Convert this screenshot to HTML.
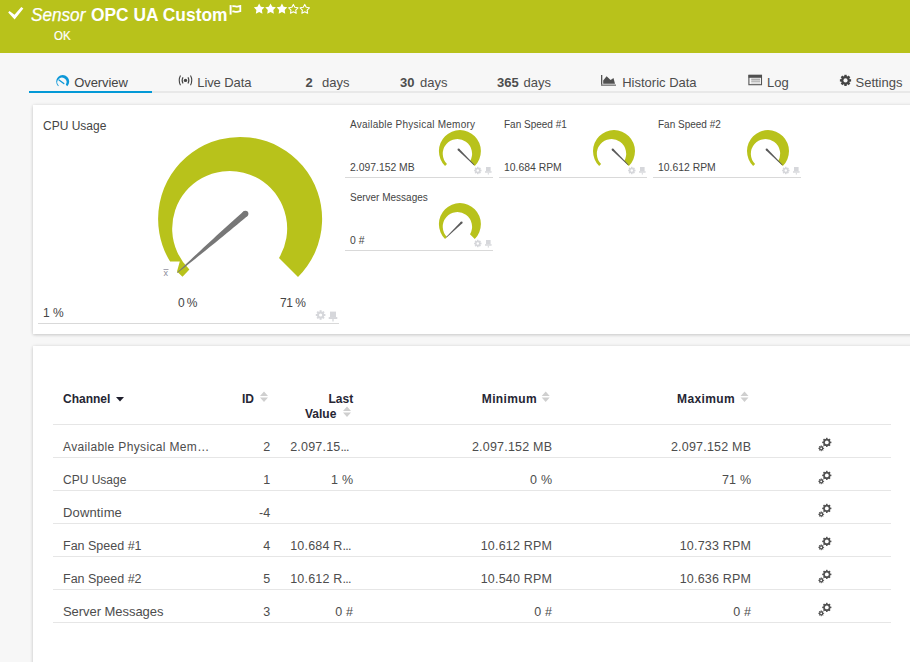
<!DOCTYPE html>
<html><head><meta charset="utf-8">
<style>
*{margin:0;padding:0;box-sizing:border-box}
html,body{width:910px;height:662px;overflow:hidden;background:#f7f7f7;font-family:"Liberation Sans",sans-serif;position:relative}
.a{position:absolute;white-space:nowrap;line-height:1}
#hdr{position:absolute;left:0;top:0;width:910px;height:53px;background:#b8c21b}
.w{color:#fff}
.tab{color:#4d4d4d;font-size:13px}
.panel{position:absolute;background:#fff;box-shadow:0 1px 3px rgba(0,0,0,.16),0 0 4px rgba(0,0,0,.07)}
.ct{color:#444;font-size:12px}
.st{color:#444;font-size:10px}
.th{color:#262634;font-size:12px;font-weight:bold}
.td{color:#4d4d4d;font-size:12px}
.tn{color:#4d4d4d;font-size:12.5px;letter-spacing:0.2px}
.hl{position:absolute;height:1px;background:#e6e6e6}
</style></head>
<body>
<div id="hdr"></div>
<svg class="a" style="left:0;top:0" width="320" height="25" viewBox="0 0 320 25"><path d="M9.5 11 L14.5 14.8 L21.3 7 L23.4 8.5 L14.6 19.6 L8.2 12.6 Z" fill="#fff"/><rect x="229.6" y="5.1" width="2" height="9.5" fill="#fff"/><path d="M232.3 6.4 C234.5 5.4 236.5 7.2 238.5 6.3 C239.5 6 240.3 5.9 240.3 5.9 V11.2 C238.5 11.2 236.5 12.5 234.5 11.6 C233.5 11.2 232.3 11.6 232.3 11.6" fill="none" stroke="#fff" stroke-width="1.8"/><path d="M259.15 3.50 L260.85 6.75 L264.48 7.37 L261.91 10.00 L262.44 13.63 L259.15 12.00 L255.86 13.63 L256.39 10.00 L253.82 7.37 L257.45 6.75Z" fill="#fff"/><path d="M270.55 3.50 L272.25 6.75 L275.88 7.37 L273.31 10.00 L273.84 13.63 L270.55 12.00 L267.26 13.63 L267.79 10.00 L265.22 7.37 L268.85 6.75Z" fill="#fff"/><path d="M281.95 3.50 L283.65 6.75 L287.28 7.37 L284.71 10.00 L285.24 13.63 L281.95 12.00 L278.66 13.63 L279.19 10.00 L276.62 7.37 L280.25 6.75Z" fill="#fff"/><path d="M293.35 4.40 L294.82 7.28 L298.01 7.79 L295.73 10.07 L296.23 13.26 L293.35 11.80 L290.47 13.26 L290.97 10.07 L288.69 7.79 L291.88 7.28Z" fill="none" stroke="#fff" stroke-width="1.1" stroke-linejoin="round"/><path d="M304.75 4.40 L306.22 7.28 L309.41 7.79 L307.13 10.07 L307.63 13.26 L304.75 11.80 L301.87 13.26 L302.37 10.07 L300.09 7.79 L303.28 7.28Z" fill="none" stroke="#fff" stroke-width="1.1" stroke-linejoin="round"/></svg>
<div class="a w" style="left:31.2px;top:5.6px;font-size:18.2px;font-style:italic;transform:scaleX(0.943);transform-origin:0 0;-webkit-text-stroke:0.25px #fff">Sensor</div>
<div class="a w" style="left:91px;top:5.0px;font-size:19px;font-weight:bold;transform:scaleX(0.915);transform-origin:0 0">OPC UA Custom</div>
<div class="a w" style="left:54.2px;top:29.9px;font-size:12.8px;transform:scaleX(0.9);transform-origin:0 0;-webkit-text-stroke:0.2px #fff">OK</div>
<div class="hl" style="left:29px;top:91px;width:881px;height:2px;background:#e8e8e8"></div>
<div class="hl" style="left:29px;top:91px;width:123px;height:2px;background:#0399d6"></div>
<svg class="a" style="left:0;top:60px" width="100" height="40" viewBox="0 60 100 40"><path transform="translate(62.7 81.6) scale(0.0793)" d="M58 58 A82 82 0 1 0 -58 58 L-50 50 A57.5 57.5 0 1 1 39 39 Z" fill="#0d98d8"/><path d="M59 80 L63.8 83.6" stroke="#0d98d8" stroke-width="1.3" stroke-linecap="round"/></svg>
<div class="a tab" style="left:74.3px;top:75.6px;color:#444;letter-spacing:-0.1px">Overview</div>
<svg class="a" style="left:0;top:60px" width="200" height="40" viewBox="0 60 200 40"><circle cx="185.5" cy="80.4" r="1.7" fill="#444"/><path d="M183 77.3 Q181.2 80.4 183 83.5 M188 77.3 Q189.8 80.4 188 83.5 M180.5 75.6 Q177.9 80.4 180.5 85.2 M190.5 75.6 Q193.1 80.4 190.5 85.2" fill="none" stroke="#444" stroke-width="1.1"/></svg>
<div class="a tab" style="left:197.3px;top:75.6px;letter-spacing:-0.1px">Live Data</div>
<div class="a tab" style="left:305.5px;top:75.6px;font-weight:bold">2</div>
<div class="a tab" style="left:322px;top:75.6px;">days</div>
<div class="a tab" style="left:400px;top:75.6px;font-weight:bold">30</div>
<div class="a tab" style="left:420px;top:75.6px;">days</div>
<div class="a tab" style="left:497px;top:75.6px;font-weight:bold">365</div>
<div class="a tab" style="left:523.5px;top:75.6px;">days</div>
<svg class="a" style="left:600px;top:73px" width="17" height="14" viewBox="0 0 17 14"><rect x="1" y="2" width="1.3" height="11" fill="#555"/><rect x="1" y="11.4" width="15" height="1.6" fill="#8a8a8a"/><path d="M3.2 10.8 V7.5 L6.6 3.2 L10.6 7.1 L13.5 5.1 L15 10.8 Z" fill="#505050"/></svg>
<div class="a tab" style="left:622.2px;top:75.6px">Historic Data</div>
<svg class="a" style="left:748px;top:74px" width="15" height="12" viewBox="0 0 15 12"><rect x="0.9" y="1.3" width="12.6" height="9.4" fill="none" stroke="#555" stroke-width="1.1"/><rect x="0.5" y="0.9" width="13.4" height="2.9" fill="#505050"/><path d="M3.2 5.2 H12 M3.2 7.1 H12" stroke="#777" stroke-width="0.8"/><path d="M3.2 9 H12" stroke="#bbb" stroke-width="0.8"/></svg>
<div class="a tab" style="left:767px;top:75.6px">Log</div>
<svg class="a" style="left:0;top:60px" width="910" height="30" viewBox="0 60 910 30"><g transform="translate(845.5 80.4)" fill="#444"><circle r="4.4"/><rect x="-1.2" y="-5.6" width="2.4" height="11.2" transform="rotate(0.0)"/><rect x="-1.2" y="-5.6" width="2.4" height="11.2" transform="rotate(45.0)"/><rect x="-1.2" y="-5.6" width="2.4" height="11.2" transform="rotate(90.0)"/><rect x="-1.2" y="-5.6" width="2.4" height="11.2" transform="rotate(135.0)"/><circle r="2.1" fill="#f7f7f7"/></g></svg>
<div class="a tab" style="left:855.5px;top:75.6px">Settings</div>
<div class="panel" style="left:33px;top:105px;width:890px;height:229px"></div>
<div class="a ct" style="left:43px;top:119.5px">CPU Usage</div>
<svg class="a" style="left:0;top:0" width="910" height="340" viewBox="0 0 910 340"><path d="M298 277 A82 82 0 1 0 170.1 261.6 L179.8 261.6 L177 271.6 L182.5 276.7 L189.4 269.5 A57.5 57.5 0 1 1 279 258 Z" fill="#b8c21b"/><path d="M243.44 211.43 L240.05 214.41 L236.67 217.41 L233.31 220.42 L229.96 223.45 L226.62 226.48 L223.28 229.52 L219.95 232.56 L216.62 235.61 L213.30 238.67 L209.98 241.73 L206.67 244.79 L203.36 247.87 L200.05 250.94 L196.75 254.02 L193.45 257.10 L190.16 260.19 L186.86 263.28 L183.57 266.38 L180.29 269.47 L177.00 272.57 L177.40 273.03 L180.93 270.22 L184.47 267.40 L188.00 264.59 L191.52 261.77 L195.05 258.95 L198.57 256.12 L202.09 253.29 L205.60 250.45 L209.11 247.62 L212.62 244.77 L216.12 241.92 L219.62 239.07 L223.11 236.21 L226.60 233.34 L230.08 230.47 L233.56 227.59 L237.03 224.71 L240.49 221.81 L243.93 218.90 L247.36 215.97Z" fill="#777"/><circle cx="245.4" cy="213.7" r="3.0" fill="#777"/><rect x="163.5" y="269" width="5" height="0.9" fill="#9a9aa8"/></svg>
<div class="a" style="left:163.5px;top:268.7px;font-size:9px;color:#8a8a9a">x</div>
<div class="a ct" style="left:178px;top:297px;letter-spacing:-0.6px">0 %</div>
<div class="a ct" style="left:280px;top:297px;letter-spacing:-0.5px">71 %</div>
<div class="a ct" style="left:43px;top:307px">1 %</div>
<div class="hl" style="left:38px;top:323px;width:301px;background:#d9d9d9"></div>
<div class="a st" style="left:350px;top:119.5px;letter-spacing:0.24px">Available Physical Memory</div>
<div class="a st" style="left:350px;top:162.5px;font-size:10.4px">2.097.152 MB</div>
<div class="hl" style="left:345px;top:177px;width:148px;background:#d9d9d9"></div>
<div class="a st" style="left:504px;top:119.5px;letter-spacing:0px">Fan Speed #1</div>
<div class="a st" style="left:504px;top:162.5px;font-size:10.4px">10.684 RPM</div>
<div class="hl" style="left:499px;top:177px;width:148px;background:#d9d9d9"></div>
<div class="a st" style="left:658px;top:119.5px;letter-spacing:0px">Fan Speed #2</div>
<div class="a st" style="left:658px;top:162.5px;font-size:10.4px">10.612 RPM</div>
<div class="hl" style="left:653px;top:177px;width:148px;background:#d9d9d9"></div>
<div class="a st" style="left:350px;top:192.5px;letter-spacing:0px">Server Messages</div>
<div class="a st" style="left:350px;top:235.5px;font-size:10.4px">0 #</div>
<div class="hl" style="left:345px;top:250px;width:148px;background:#d9d9d9"></div>
<svg class="a" style="left:0;top:0" width="910" height="340" viewBox="0 0 910 340"><path transform="translate(459.9 151.1)" d="M14.85 14.85 A21 21 0 1 0 -14.85 14.85 L-12.91 12.91 A14.65 14.65 0 1 1 10.09 10.09 Z" fill="#b8c21b"/><path d="M457.80 150.21 L473.95 165.15 L474.45 164.65 L459.20 148.79Z" fill="#5a5a5a"/><circle cx="458.50" cy="149.50" r="1.0" fill="#5a5a5a"/><path transform="translate(614 151.1)" d="M14.85 14.85 A21 21 0 1 0 -14.85 14.85 L-12.91 12.91 A14.65 14.65 0 1 1 10.09 10.09 Z" fill="#b8c21b"/><path d="M611.90 150.21 L628.05 165.15 L628.55 164.65 L613.30 148.79Z" fill="#5a5a5a"/><circle cx="612.60" cy="149.50" r="1.0" fill="#5a5a5a"/><path transform="translate(768 151.1)" d="M14.85 14.85 A21 21 0 1 0 -14.85 14.85 L-12.91 12.91 A14.65 14.65 0 1 1 10.09 10.09 Z" fill="#b8c21b"/><path d="M765.90 150.21 L782.05 165.15 L782.55 164.65 L767.30 148.79Z" fill="#5a5a5a"/><circle cx="766.60" cy="149.50" r="1.0" fill="#5a5a5a"/><path transform="translate(459.9 224.1)" d="M14.85 14.85 A21 21 0 1 0 -14.85 14.85 L-12.91 12.91 A14.65 14.65 0 1 1 10.09 10.09 Z" fill="#b8c21b"/><path d="M460.87 221.75 L446.19 237.09 L446.61 237.51 L462.33 223.25Z" fill="#5a5a5a"/><circle cx="461.60" cy="222.50" r="1.05" fill="#5a5a5a"/><g transform="translate(477.8 170.5)" fill="#d6d7db"><circle r="2.8"/><rect x="-0.8" y="-3.7" width="1.6" height="7.4" transform="rotate(0.0)"/><rect x="-0.8" y="-3.7" width="1.6" height="7.4" transform="rotate(45.0)"/><rect x="-0.8" y="-3.7" width="1.6" height="7.4" transform="rotate(90.0)"/><rect x="-0.8" y="-3.7" width="1.6" height="7.4" transform="rotate(135.0)"/><circle r="1.2" fill="#fff"/></g><g transform="translate(488.3 170)" fill="#d6d7db"><rect x="-2.3" y="-3" width="4.6" height="4.2"/><rect x="-3.3" y="1.2" width="6.6" height="1.5"/><rect x="-0.5" y="2.7" width="1" height="1.9"/></g><g transform="translate(631.8 170.5)" fill="#d6d7db"><circle r="2.8"/><rect x="-0.8" y="-3.7" width="1.6" height="7.4" transform="rotate(0.0)"/><rect x="-0.8" y="-3.7" width="1.6" height="7.4" transform="rotate(45.0)"/><rect x="-0.8" y="-3.7" width="1.6" height="7.4" transform="rotate(90.0)"/><rect x="-0.8" y="-3.7" width="1.6" height="7.4" transform="rotate(135.0)"/><circle r="1.2" fill="#fff"/></g><g transform="translate(642.3 170)" fill="#d6d7db"><rect x="-2.3" y="-3" width="4.6" height="4.2"/><rect x="-3.3" y="1.2" width="6.6" height="1.5"/><rect x="-0.5" y="2.7" width="1" height="1.9"/></g><g transform="translate(785.8 170.5)" fill="#d6d7db"><circle r="2.8"/><rect x="-0.8" y="-3.7" width="1.6" height="7.4" transform="rotate(0.0)"/><rect x="-0.8" y="-3.7" width="1.6" height="7.4" transform="rotate(45.0)"/><rect x="-0.8" y="-3.7" width="1.6" height="7.4" transform="rotate(90.0)"/><rect x="-0.8" y="-3.7" width="1.6" height="7.4" transform="rotate(135.0)"/><circle r="1.2" fill="#fff"/></g><g transform="translate(796.3 170)" fill="#d6d7db"><rect x="-2.3" y="-3" width="4.6" height="4.2"/><rect x="-3.3" y="1.2" width="6.6" height="1.5"/><rect x="-0.5" y="2.7" width="1" height="1.9"/></g><g transform="translate(477.8 243.5)" fill="#d6d7db"><circle r="2.8"/><rect x="-0.8" y="-3.7" width="1.6" height="7.4" transform="rotate(0.0)"/><rect x="-0.8" y="-3.7" width="1.6" height="7.4" transform="rotate(45.0)"/><rect x="-0.8" y="-3.7" width="1.6" height="7.4" transform="rotate(90.0)"/><rect x="-0.8" y="-3.7" width="1.6" height="7.4" transform="rotate(135.0)"/><circle r="1.2" fill="#fff"/></g><g transform="translate(488.3 243)" fill="#d6d7db"><rect x="-2.3" y="-3" width="4.6" height="4.2"/><rect x="-3.3" y="1.2" width="6.6" height="1.5"/><rect x="-0.5" y="2.7" width="1" height="1.9"/></g><g transform="translate(320.6 315)" fill="#d6d7db"><circle r="3.6"/><rect x="-1.0" y="-4.8" width="2.0" height="9.6" transform="rotate(0.0)"/><rect x="-1.0" y="-4.8" width="2.0" height="9.6" transform="rotate(45.0)"/><rect x="-1.0" y="-4.8" width="2.0" height="9.6" transform="rotate(90.0)"/><rect x="-1.0" y="-4.8" width="2.0" height="9.6" transform="rotate(135.0)"/><circle r="1.6" fill="#fff"/></g><g transform="translate(333 315.5) scale(1.3)" fill="#d6d7db"><rect x="-2.3" y="-3" width="4.6" height="4.2"/><rect x="-3.3" y="1.2" width="6.6" height="1.5"/><rect x="-0.5" y="2.7" width="1" height="1.9"/></g></svg>
<div class="panel" style="left:33px;top:346px;width:890px;height:400px"></div>
<div class="a th" style="left:63px;top:393px">Channel</div>
<svg class="a" style="left:116px;top:397px" width="8" height="5" viewBox="0 0 8 5"><path d="M0 0 H8 L4 4.5 Z" fill="#1e1e2c"/></svg>
<div class="a th" style="left:242px;top:393px">ID</div>
<div class="a th" style="left:328.5px;top:393px">Last</div>
<div class="a th" style="left:305px;top:407.5px">Value</div>
<div class="a th" style="left:481.8px;top:393px;letter-spacing:0.35px">Minimum</div>
<div class="a th" style="left:677px;top:393px;letter-spacing:0.4px">Maximum</div>
<svg class="a" style="left:0;top:0" width="910" height="662" viewBox="0 0 910 662"><path transform="translate(260 391.5)" d="M0 4.5 L4 0 L8 4.5 Z M0 6 L8 6 L4 10.5 Z" fill="#cfcfcf"/><path transform="translate(343 406.5)" d="M0 4.5 L4 0 L8 4.5 Z M0 6 L8 6 L4 10.5 Z" fill="#cfcfcf"/><path transform="translate(541.7 391.5)" d="M0 4.5 L4 0 L8 4.5 Z M0 6 L8 6 L4 10.5 Z" fill="#cfcfcf"/><path transform="translate(740.5 391.5)" d="M0 4.5 L4 0 L8 4.5 Z M0 6 L8 6 L4 10.5 Z" fill="#cfcfcf"/><g transform="translate(826.8 442.40000000000003)" fill="#505050"><circle r="3.6"/><rect x="-0.75" y="-4.6" width="1.5" height="9.2" transform="rotate(0.0)"/><rect x="-0.75" y="-4.6" width="1.5" height="9.2" transform="rotate(45.0)"/><rect x="-0.75" y="-4.6" width="1.5" height="9.2" transform="rotate(90.0)"/><rect x="-0.75" y="-4.6" width="1.5" height="9.2" transform="rotate(135.0)"/><circle r="1.9" fill="#fff"/></g><g transform="translate(821.2 448.3)" fill="#505050"><circle r="2.1"/><rect x="-0.5" y="-2.9" width="1.0" height="5.8" transform="rotate(0.0)"/><rect x="-0.5" y="-2.9" width="1.0" height="5.8" transform="rotate(45.0)"/><rect x="-0.5" y="-2.9" width="1.0" height="5.8" transform="rotate(90.0)"/><rect x="-0.5" y="-2.9" width="1.0" height="5.8" transform="rotate(135.0)"/><circle r="0.9" fill="#fff"/></g><g transform="translate(826.8 475.40000000000003)" fill="#505050"><circle r="3.6"/><rect x="-0.75" y="-4.6" width="1.5" height="9.2" transform="rotate(0.0)"/><rect x="-0.75" y="-4.6" width="1.5" height="9.2" transform="rotate(45.0)"/><rect x="-0.75" y="-4.6" width="1.5" height="9.2" transform="rotate(90.0)"/><rect x="-0.75" y="-4.6" width="1.5" height="9.2" transform="rotate(135.0)"/><circle r="1.9" fill="#fff"/></g><g transform="translate(821.2 481.3)" fill="#505050"><circle r="2.1"/><rect x="-0.5" y="-2.9" width="1.0" height="5.8" transform="rotate(0.0)"/><rect x="-0.5" y="-2.9" width="1.0" height="5.8" transform="rotate(45.0)"/><rect x="-0.5" y="-2.9" width="1.0" height="5.8" transform="rotate(90.0)"/><rect x="-0.5" y="-2.9" width="1.0" height="5.8" transform="rotate(135.0)"/><circle r="0.9" fill="#fff"/></g><g transform="translate(826.8 508.4)" fill="#505050"><circle r="3.6"/><rect x="-0.75" y="-4.6" width="1.5" height="9.2" transform="rotate(0.0)"/><rect x="-0.75" y="-4.6" width="1.5" height="9.2" transform="rotate(45.0)"/><rect x="-0.75" y="-4.6" width="1.5" height="9.2" transform="rotate(90.0)"/><rect x="-0.75" y="-4.6" width="1.5" height="9.2" transform="rotate(135.0)"/><circle r="1.9" fill="#fff"/></g><g transform="translate(821.2 514.3)" fill="#505050"><circle r="2.1"/><rect x="-0.5" y="-2.9" width="1.0" height="5.8" transform="rotate(0.0)"/><rect x="-0.5" y="-2.9" width="1.0" height="5.8" transform="rotate(45.0)"/><rect x="-0.5" y="-2.9" width="1.0" height="5.8" transform="rotate(90.0)"/><rect x="-0.5" y="-2.9" width="1.0" height="5.8" transform="rotate(135.0)"/><circle r="0.9" fill="#fff"/></g><g transform="translate(826.8 541.4)" fill="#505050"><circle r="3.6"/><rect x="-0.75" y="-4.6" width="1.5" height="9.2" transform="rotate(0.0)"/><rect x="-0.75" y="-4.6" width="1.5" height="9.2" transform="rotate(45.0)"/><rect x="-0.75" y="-4.6" width="1.5" height="9.2" transform="rotate(90.0)"/><rect x="-0.75" y="-4.6" width="1.5" height="9.2" transform="rotate(135.0)"/><circle r="1.9" fill="#fff"/></g><g transform="translate(821.2 547.3)" fill="#505050"><circle r="2.1"/><rect x="-0.5" y="-2.9" width="1.0" height="5.8" transform="rotate(0.0)"/><rect x="-0.5" y="-2.9" width="1.0" height="5.8" transform="rotate(45.0)"/><rect x="-0.5" y="-2.9" width="1.0" height="5.8" transform="rotate(90.0)"/><rect x="-0.5" y="-2.9" width="1.0" height="5.8" transform="rotate(135.0)"/><circle r="0.9" fill="#fff"/></g><g transform="translate(826.8 574.4)" fill="#505050"><circle r="3.6"/><rect x="-0.75" y="-4.6" width="1.5" height="9.2" transform="rotate(0.0)"/><rect x="-0.75" y="-4.6" width="1.5" height="9.2" transform="rotate(45.0)"/><rect x="-0.75" y="-4.6" width="1.5" height="9.2" transform="rotate(90.0)"/><rect x="-0.75" y="-4.6" width="1.5" height="9.2" transform="rotate(135.0)"/><circle r="1.9" fill="#fff"/></g><g transform="translate(821.2 580.3)" fill="#505050"><circle r="2.1"/><rect x="-0.5" y="-2.9" width="1.0" height="5.8" transform="rotate(0.0)"/><rect x="-0.5" y="-2.9" width="1.0" height="5.8" transform="rotate(45.0)"/><rect x="-0.5" y="-2.9" width="1.0" height="5.8" transform="rotate(90.0)"/><rect x="-0.5" y="-2.9" width="1.0" height="5.8" transform="rotate(135.0)"/><circle r="0.9" fill="#fff"/></g><g transform="translate(826.8 607.4)" fill="#505050"><circle r="3.6"/><rect x="-0.75" y="-4.6" width="1.5" height="9.2" transform="rotate(0.0)"/><rect x="-0.75" y="-4.6" width="1.5" height="9.2" transform="rotate(45.0)"/><rect x="-0.75" y="-4.6" width="1.5" height="9.2" transform="rotate(90.0)"/><rect x="-0.75" y="-4.6" width="1.5" height="9.2" transform="rotate(135.0)"/><circle r="1.9" fill="#fff"/></g><g transform="translate(821.2 613.3)" fill="#505050"><circle r="2.1"/><rect x="-0.5" y="-2.9" width="1.0" height="5.8" transform="rotate(0.0)"/><rect x="-0.5" y="-2.9" width="1.0" height="5.8" transform="rotate(45.0)"/><rect x="-0.5" y="-2.9" width="1.0" height="5.8" transform="rotate(90.0)"/><rect x="-0.5" y="-2.9" width="1.0" height="5.8" transform="rotate(135.0)"/><circle r="0.9" fill="#fff"/></g></svg>
<div class="hl" style="left:53px;top:424px;width:838px"></div>
<div class="a td" style="left:63px;top:440.9px;font-size:12px;letter-spacing:0.35px">Available Physical Mem…</div>
<div class="a tn" style="right:639.8px;top:441.0px;letter-spacing:0">2</div>
<div class="a tn" style="left:290.2px;top:441.0px">2.097.15<span style="letter-spacing:-0.7px">...</span></div>
<div class="a tn" style="right:357.8px;top:441.0px">2.097.152 MB</div>
<div class="a tn" style="right:158.8px;top:441.0px">2.097.152 MB</div>
<div class="hl" style="left:53px;top:457px;width:838px"></div>
<div class="a td" style="left:63px;top:473.9px;font-size:12px;letter-spacing:0px">CPU Usage</div>
<div class="a tn" style="right:639.8px;top:474.0px;letter-spacing:0">1</div>
<div class="a tn" style="right:556.8px;top:474.0px">1 %</div>
<div class="a tn" style="right:357.8px;top:474.0px">0 %</div>
<div class="a tn" style="right:158.8px;top:474.0px">71 %</div>
<div class="hl" style="left:53px;top:490px;width:838px"></div>
<div class="a td" style="left:63px;top:506.1px;font-size:13px;letter-spacing:0.15px">Downtime</div>
<div class="a tn" style="right:639.8px;top:507.0px;letter-spacing:0">-4</div>
<div class="hl" style="left:53px;top:523px;width:838px"></div>
<div class="a td" style="left:63px;top:539.5px;font-size:12.5px;letter-spacing:0px">Fan Speed #1</div>
<div class="a tn" style="right:639.8px;top:540.0px;letter-spacing:0">4</div>
<div class="a tn" style="left:290.2px;top:540.0px">10.684 R<span style="letter-spacing:-0.7px">...</span></div>
<div class="a tn" style="right:357.8px;top:540.0px">10.612 RPM</div>
<div class="a tn" style="right:158.8px;top:540.0px">10.733 RPM</div>
<div class="hl" style="left:53px;top:556px;width:838px"></div>
<div class="a td" style="left:63px;top:572.5px;font-size:12.5px;letter-spacing:0px">Fan Speed #2</div>
<div class="a tn" style="right:639.8px;top:573.0px;letter-spacing:0">5</div>
<div class="a tn" style="left:290.2px;top:573.0px">10.612 R<span style="letter-spacing:-0.7px">...</span></div>
<div class="a tn" style="right:357.8px;top:573.0px">10.540 RPM</div>
<div class="a tn" style="right:158.8px;top:573.0px">10.636 RPM</div>
<div class="hl" style="left:53px;top:589px;width:838px"></div>
<div class="a td" style="left:63px;top:605.1px;font-size:13px;letter-spacing:-0.05px">Server Messages</div>
<div class="a tn" style="right:639.8px;top:606.0px;letter-spacing:0">3</div>
<div class="a tn" style="right:556.8px;top:606.0px">0 #</div>
<div class="a tn" style="right:357.8px;top:606.0px">0 #</div>
<div class="a tn" style="right:158.8px;top:606.0px">0 #</div>
<div class="hl" style="left:53px;top:622px;width:838px"></div>
</body></html>
